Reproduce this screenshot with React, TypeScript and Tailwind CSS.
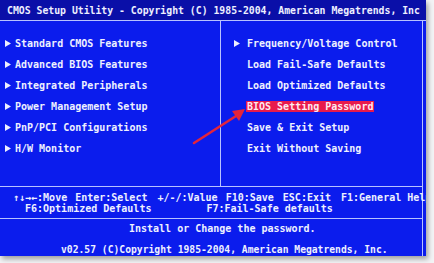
import React from 'react';

const leftItems = [
  'Standard CMOS Features',
  'Advanced BIOS Features',
  'Integrated Peripherals',
  'Power Management Setup',
  'PnP/PCI Configurations',
  'H/W Monitor',
];

const rightItems: { label: string; sub?: boolean; active?: boolean }[] = [
  { label: 'Frequency/Voltage Control', sub: true },
  { label: 'Load Fail-Safe Defaults' },
  { label: 'Load Optimized Defaults' },
  { label: 'BIOS Setting Password', active: true },
  { label: 'Save & Exit Setup' },
  { label: 'Exit Without Saving' },
];

function Tri() {
  return (
    <svg width="6" height="7" viewBox="0 0 6 7" className="shrink-0">
      <path d="M0 0 L6 3.5 L0 7 Z" fill="#eef0ff" />
    </svg>
  );
}

export default function App() {
  return (
    <div
      className="relative h-[263px] w-[434px] overflow-hidden bg-[#f3f3f5]"
      style={{ fontFamily: '"DejaVu Sans Mono", "Liberation Mono", monospace' }}
    >
      <div className="flex h-[256px] w-[426px] flex-col overflow-hidden bg-[#0b1ced] text-[10px] font-bold text-[#eef0ff] shadow-[2px_3px_5px_rgba(0,0,0,0.35)]">
        {/* title */}
        <div className="h-[20px] whitespace-nowrap bg-[#0a0fa8] pl-[7px] text-[9.8px] leading-[22px]">
          CMOS Setup Utility - Copyright (C) 1985-2004, American Megatrends, Inc
        </div>
        <div className="h-px bg-[#b8c2ff]" />

        {/* menus */}
        <div className="mr-[3px] flex h-[168px] border-b border-r border-[#b8c2ff]">
          <div className="w-[221px] border-r border-[#b8c2ff] pt-[12px]">
            {leftItems.map((t) => (
              <div key={t} className="flex h-[21px] items-center whitespace-nowrap pl-[5px]">
                <Tri />
                <span className="ml-[4px]">{t}</span>
              </div>
            ))}
          </div>
          <div className="flex-1 pt-[12px]">
            {rightItems.map((it) => (
              <div key={it.label} className="flex h-[21px] items-center whitespace-nowrap pl-[13px]">
                <span className="w-[12px]">{it.sub ? <Tri /> : null}</span>
                <span className={it.active ? 'bg-[#e81a4c] px-[1px] leading-[11px] text-[#ffe8ee]' : 'px-[1px]'}>
                  {it.label}
                </span>
              </div>
            ))}
          </div>
        </div>

        {/* key help */}
        <div className="mr-[3px] h-[32px] whitespace-nowrap border-b border-r border-[#b8c2ff] pt-[5px] leading-[11px]">
          <div className="flex pl-[13px]">
            <span>↑↓→←:Move</span>
            <span className="ml-[8px]">Enter:Select</span>
            <span className="ml-[10px]">+/-/:Value</span>
            <span className="ml-[8px]">F10:Save</span>
            <span className="ml-[9px]">ESC:Exit</span>
            <span className="ml-[10px]">F1:General Help</span>
          </div>
          <div className="flex pl-[25px]">
            <span>F6:Optimized Defaults</span>
            <span className="ml-[55px]">F7:Fail-Safe defaults</span>
          </div>
        </div>

        {/* status */}
        <div className="mr-[3px] flex-1 border-r border-[#b8c2ff] whitespace-nowrap">
          <div className="pl-[129px] pt-[4px] leading-[12px]">Install or Change the password.</div>
          <div className="pl-[61px] pt-[9px] text-[9.7px] leading-[12px]">
            v02.57 (C)Copyright 1985-2004, American Megatrends, Inc.
          </div>
        </div>
      </div>

      {/* red arrow drawn over the screen */}
      <svg className="absolute left-0 top-0" width="434" height="263" viewBox="0 0 434 263">
        <line x1="194" y1="143" x2="236" y2="116" stroke="#e3243b" strokeWidth="2.6" strokeLinecap="round" />
        <path d="M245 109 L232 111 L239 121 Z" fill="#e3243b" />
      </svg>
    </div>
  );
}
